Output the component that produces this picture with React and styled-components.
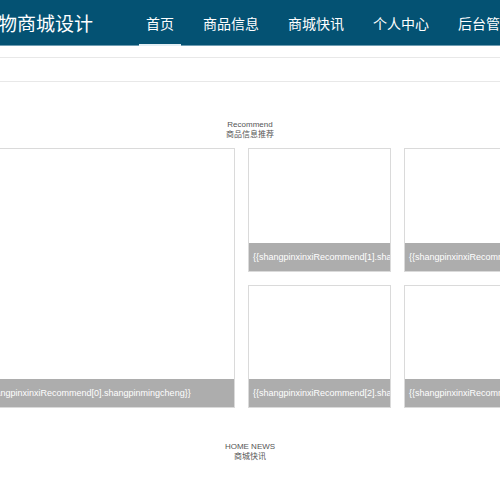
import React from "react";
import styled, { createGlobalStyle } from "styled-components";

const Global = createGlobalStyle`
  html, body {
    margin: 0;
    padding: 0;
    background: #fff;
    overflow-x: hidden;
  }
  body {
    font-family: "Liberation Sans", Arial, "Noto Sans CJK SC", sans-serif;
  }
`;

const Header = styled.header`
  height: 45px;
  background: #045273;
  border-bottom: 1px solid #6f9db2;
  display: flex;
  justify-content: center;
`;

const HeaderInner = styled.div`
  display: flex;
  align-items: stretch;
  flex-shrink: 0;
`;

const Title = styled.div`
  display: flex;
  align-items: center;
  font-size: 19px;
  color: #fff;
  white-space: nowrap;
  font-family: "Noto Sans CJK SC", sans-serif;
`;

const Nav = styled.nav`
  display: flex;
  gap: 15px;
  margin-left: 46px;
`;

const NavItem = styled.a`
  display: flex;
  align-items: center;
  padding: 0 7px;
  margin-bottom: -1px;
  font-size: 14px;
  color: #fff;
  white-space: nowrap;
  text-decoration: none;
  font-family: "Noto Sans CJK SC", sans-serif;
  box-shadow: ${(p) => (p.$active ? "inset 0 -2px 0 #e4eff4" : "none")};
`;

const Band = styled.div`
  margin-top: 11px;
  height: 23px;
  border-top: 1px solid #e8e8e8;
  border-bottom: 1px solid #e8e8e8;
`;

const SectionTitle = styled.div`
  margin-top: ${(p) => p.$top}px;
  text-align: center;
  font-size: 8px;
  line-height: 10px;
  color: #555;
`;

const Center = styled.div`
  display: flex;
  justify-content: center;
  margin-top: 8px;
`;

const Grid = styled.div`
  width: 550px;
  flex-shrink: 0;
  display: grid;
  grid-template-columns: 260px 143px 143px;
  grid-template-rows: 123.5px 123.5px;
  gap: 13px;
`;

const Card = styled.div`
  box-sizing: border-box;
  border: 1px solid #dadada;
  background: #fff;
  display: flex;
  flex-direction: column;
  justify-content: flex-end;
  overflow: hidden;
  grid-row: ${(p) => (p.$big ? "1 / span 2" : "auto")};
`;

const Caption = styled.div`
  height: 28px;
  line-height: 28px;
  background: #adadad;
  color: #fff;
  font-size: 9px;
  padding-left: 4px;
  white-space: nowrap;
  overflow: hidden;
`;

const items = [
  { big: true, i: 0 },
  { i: 1 },
  { i: 3 },
  { i: 2 },
  { i: 4 },
];

export default function App() {
  return (
    <>
      <Global />
      <Header>
        <HeaderInner>
          <Title>购物商城设计</Title>
          <Nav>
            <NavItem $active>首页</NavItem>
            <NavItem>商品信息</NavItem>
            <NavItem>商城快讯</NavItem>
            <NavItem>个人中心</NavItem>
            <NavItem>后台管理</NavItem>
          </Nav>
        </HeaderInner>
      </Header>
      <Band />
      <SectionTitle $top={38}>
        Recommend
        <br />
        商品信息推荐
      </SectionTitle>
      <Center>
        <Grid>
          {items.map((it) => (
            <Card key={it.i} $big={it.big}>
              <Caption>
                {`{{shangpinxinxiRecommend[${it.i}].shangpinmingcheng}}`}
              </Caption>
            </Card>
          ))}
        </Grid>
      </Center>
      <SectionTitle $top={34}>
        HOME NEWS
        <br />
        商城快讯
      </SectionTitle>
    </>
  );
}
